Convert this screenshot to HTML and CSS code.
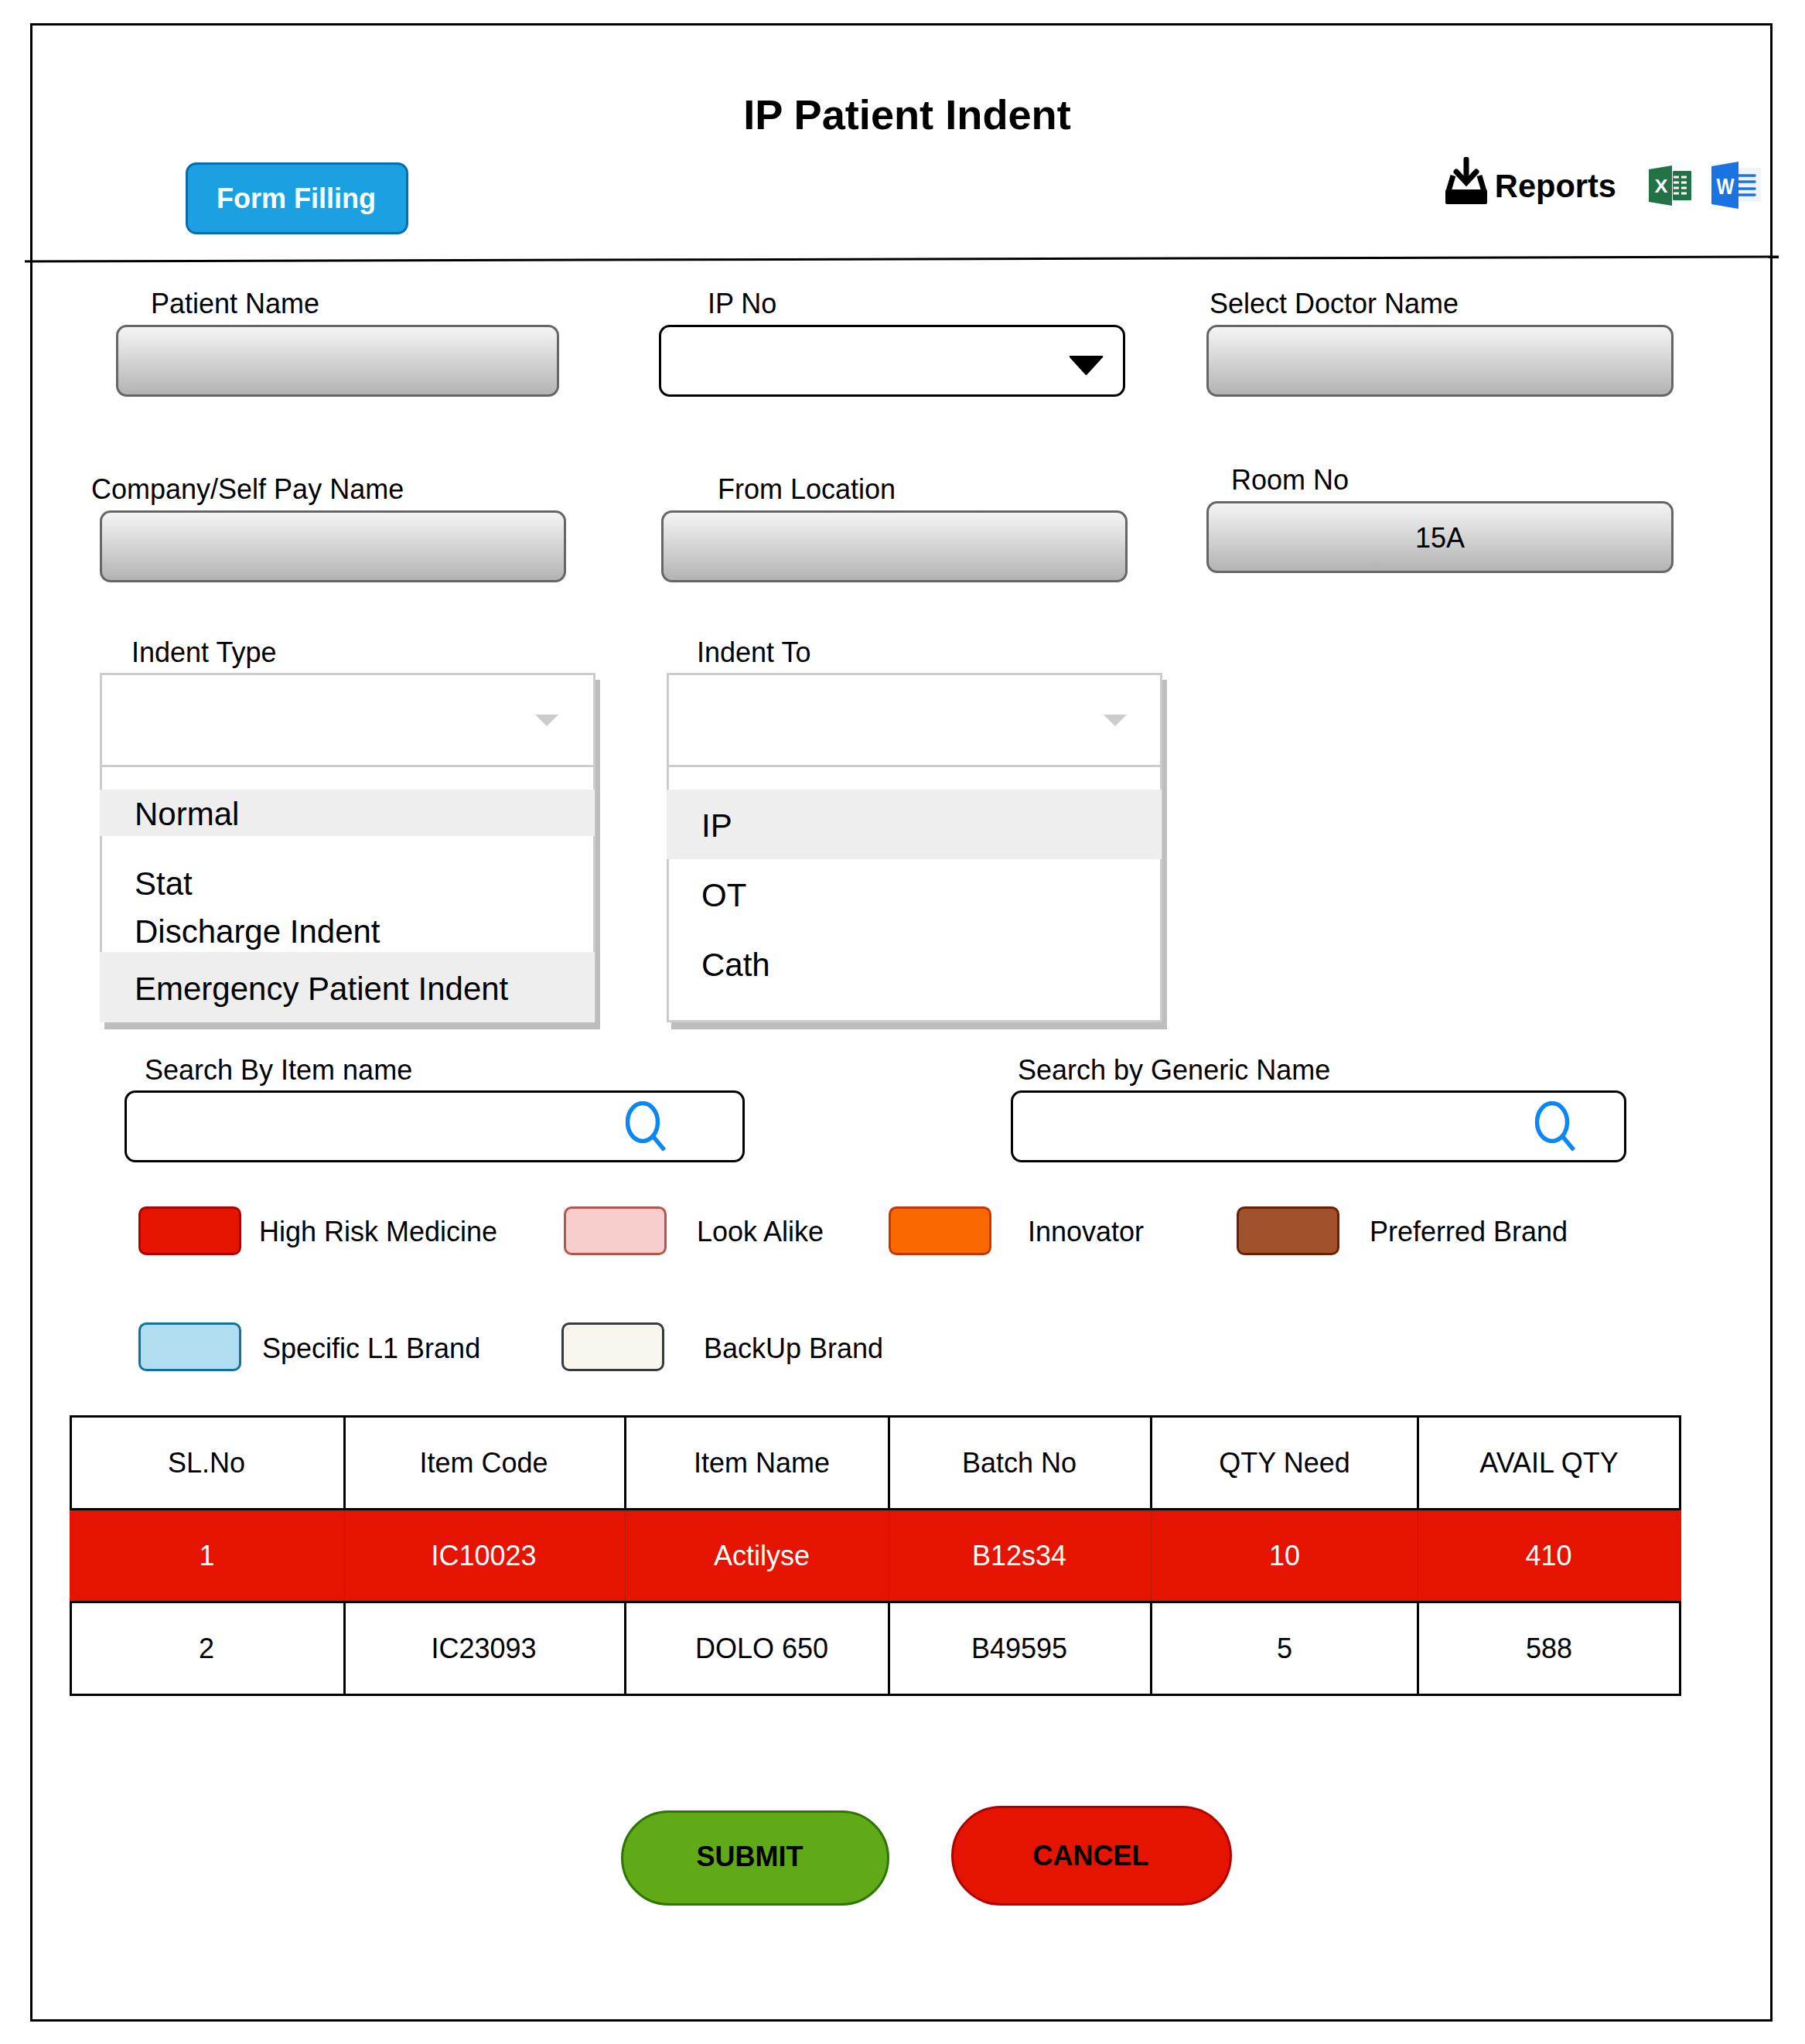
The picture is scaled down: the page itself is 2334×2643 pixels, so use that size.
FILE: index.html
```html
<!DOCTYPE html>
<html lang="en">
<head>
    <meta charset="UTF-8">
    <title>IP Patient Indent</title>
    <link rel="stylesheet" href="styles.css">
</head>
<body>
    <div class="frame">
        <header class="head">
            <h1>IP Patient Indent</h1>
            <div class="head-row">
                <button class="form-btn">Form Filling</button>
                <div class="tools">
                    <svg class="ic-reports" viewBox="0 0 54 61">
                        <path d="M27 3V32M14 19L27 33L40 19" fill="none" stroke="#000" stroke-width="7" stroke-linecap="round" stroke-linejoin="miter"/>
                        <path d="M10 24L3.5 46H50.5L44 24" fill="none" stroke="#000" stroke-width="7" stroke-linejoin="round"/>
                        <rect x="0" y="42" width="54" height="19" rx="2"/>
                    </svg>
                    <span class="reports">Reports</span>
                    <svg class="ic-excel" viewBox="0 0 55 52">
                        <rect x="31" y="7" width="24" height="38" rx="1" fill="#217346"/>
                        <path d="M0 5L30 0V52L0 47Z" fill="#217346"/>
                        <text x="16" y="35" class="logo-letter" font-size="24" textLength="17" lengthAdjust="spacingAndGlyphs">X</text>
                        <path d="M32 15h7M42 15h7M32 22h7M42 22h7M32 29h7M42 29h7M32 36h7M42 36h7" stroke="#fff" stroke-width="3"/>
                    </svg>
                    <svg class="ic-word" viewBox="0 0 64 61">
                        <rect x="34" y="8" width="30" height="44" rx="1" fill="#f0f4f8"/>
                        <path d="M0 6L35 0V61L0 55Z" fill="#1a73e0"/>
                        <text x="18" y="42" class="logo-letter" font-size="30" textLength="23" lengthAdjust="spacingAndGlyphs">W</text>
                        <path d="M35 18h21M35 26h21M35 35h21M35 43h21" stroke="#1a73e0" stroke-width="3.5" stroke-linecap="round"/>
                    </svg>
                </div>
            </div>
        </header>
        <svg class="rule" viewBox="0 0 2268 8"><line x1="0" y1="7" x2="2268" y2="1" stroke="#000" stroke-width="3"/></svg>

        <section class="row row-a">
            <div class="field f-patient">
                <label class="lbl">Patient Name</label>
                <div class="box"></div>
            </div>
            <div class="field f-ipno">
                <label class="lbl">IP No</label>
                <div class="box-select">
                    <svg class="caret" viewBox="0 0 45 27"><path d="M2 1H43Q45 1 44 3L24 25Q22.500 27 21 25L1 3Q0 1 2 1Z"/></svg>
                </div>
            </div>
            <div class="field f-doctor">
                <label class="lbl">Select Doctor Name</label>
                <div class="box"></div>
            </div>
        </section>

        <section class="row row-b">
            <div class="field f-company">
                <label class="lbl">Company/Self Pay Name</label>
                <div class="box"></div>
            </div>
            <div class="field f-location">
                <label class="lbl">From Location</label>
                <div class="box"></div>
            </div>
            <div class="field f-room">
                <label class="lbl">Room No</label>
                <div class="box">15A</div>
            </div>
        </section>

        <section class="row row-c">
            <div class="field f-type">
                <label class="lbl">Indent Type</label>
                <div class="dropdown">
                    <div class="dd-head"><span class="dd-arrow"></span></div>
                    <ul class="dd-list">
                        <li class="opt opt-on">Normal</li>
                        <li class="opt opt-stat">Stat</li>
                        <li class="opt opt-discharge">Discharge Indent</li>
                        <li class="opt opt-on opt-last">Emergency Patient Indent</li>
                    </ul>
                </div>
            </div>
            <div class="field f-to">
                <label class="lbl">Indent To</label>
                <div class="dropdown">
                    <div class="dd-head"><span class="dd-arrow"></span></div>
                    <ul class="dd-list">
                        <li class="opt opt-tall opt-on">IP</li>
                        <li class="opt opt-tall">OT</li>
                        <li class="opt opt-tall">Cath</li>
                    </ul>
                </div>
            </div>
        </section>

        <section class="row row-search">
            <div class="field f-item">
                <label class="lbl">Search By Item name</label>
                <div class="search">
                    <svg class="lens" viewBox="0 0 53 65"><ellipse cx="22" cy="27" rx="19.500" ry="24.500" fill="none" stroke="#0a87f5" stroke-width="5.500"/><path d="M36 46L50 63" stroke="#0a87f5" stroke-width="5.500"/></svg>
                </div>
            </div>
            <div class="field f-generic">
                <label class="lbl">Search by Generic Name</label>
                <div class="search">
                    <svg class="lens" viewBox="0 0 53 65"><ellipse cx="22" cy="27" rx="19.500" ry="24.500" fill="none" stroke="#0a87f5" stroke-width="5.500"/><path d="M36 46L50 63" stroke="#0a87f5" stroke-width="5.500"/></svg>
                </div>
            </div>
        </section>

        <section class="legend legend-one">
            <span class="swatch sw-red"></span><span class="lg">High Risk Medicine</span>
            <span class="swatch sw-pink"></span><span class="lg">Look Alike</span>
            <span class="swatch sw-orange"></span><span class="lg">Innovator</span>
            <span class="swatch sw-brown"></span><span class="lg">Preferred Brand</span>
        </section>
        <section class="legend legend-two">
            <span class="swatch sw-blue"></span><span class="lg">Specific L1 Brand</span>
            <span class="swatch sw-cream"></span><span class="lg">BackUp Brand</span>
        </section>

        <table class="items">
            <colgroup>
                <col class="c1"><col class="c2"><col class="c3"><col class="c4"><col class="c5"><col class="c6">
            </colgroup>
            <thead>
                <tr>
                    <th>SL.No</th>
                    <th>Item Code</th>
                    <th>Item Name</th>
                    <th>Batch No</th>
                    <th>QTY Need</th>
                    <th>AVAIL QTY</th>
                </tr>
            </thead>
            <tbody>
                <tr class="risk">
                    <td>1</td>
                    <td>IC10023</td>
                    <td>Actilyse</td>
                    <td>B12s34</td>
                    <td>10</td>
                    <td>410</td>
                </tr>
                <tr>
                    <td>2</td>
                    <td>IC23093</td>
                    <td>DOLO 650</td>
                    <td>B49595</td>
                    <td>5</td>
                    <td>588</td>
                </tr>
            </tbody>
        </table>

        <div class="actions">
            <button class="pill pill-submit">SUBMIT</button>
            <button class="pill pill-cancel">CANCEL</button>
        </div>
    </div>
</body>
</html>
```

FILE: styles.css
```css
* { box-sizing: border-box; }
body { margin: 0; background: #fff; color: #000; font-family: "Liberation Sans", Arial, sans-serif; font-size: 36px; }

.frame { width: 2253px; height: 2584px; margin: 30px 0 0 39px; border: 3px solid #000; }

/* header */
.head { height: 298px; padding-top: 84px; }
h1 { margin: 0; padding-left: 15px; font-size: 54.2px; line-height: 62px; text-align: center; }
.head-row { display: flex; justify-content: space-between; align-items: flex-start; margin-top: 23px; padding: 0 12px 0 198px; }
.form-btn { width: 288px; height: 93px; margin-top: 8px; padding: 1px 2px 0 0; background: #1ba1e2; border: 3px solid #006eaf; border-radius: 14px; color: #fff; font: bold 36px "Liberation Sans", Arial, sans-serif; }
.tools { display: flex; align-items: flex-start; margin-top: 1px; }
.ic-reports { width: 54px; height: 61px; }
.reports { margin: 14px 42px 0 10px; font-size: 41.6px; font-weight: bold; line-height: 48px; }
.ic-excel { width: 55px; height: 52px; margin: 11px 26px 0 0; }
.ic-word { width: 64px; height: 61px; margin-top: 6px; }
.logo-letter { fill: #fff; font-family: "Liberation Sans", Arial, sans-serif; font-weight: bold; text-anchor: middle; }
.rule { display: block; width: 2268px; height: 8px; margin-left: -10px; overflow: visible; }

/* form rows */
.row { display: flex; align-items: flex-start; }
.row-a { margin-top: 34px; padding-left: 108px; }
.row-b { margin-top: 88px; padding-left: 87px; }
.row-c { margin-top: 69px; padding-left: 87px; }
.row-search { margin-top: 41px; padding-left: 119px; }

.lbl { display: block; height: 47px; line-height: 40px; white-space: nowrap; }
.row-c .lbl { height: 48px; line-height: 43px; }
.row-search .lbl { line-height: 41px; }
.box { display: flex; align-items: center; justify-content: center; height: 93px; background: linear-gradient(#f5f5f5, #b3b3b3); border: 3px solid #666; border-radius: 14px; }
.box-select { display: flex; justify-content: flex-end; height: 93px; padding: 36px 25px 0 0; border: 3px solid #000; border-radius: 14px; }
.caret { width: 45px; height: 27px; }

.f-patient { width: 573px; }
.f-patient .lbl { padding-left: 45px; }
.f-ipno { width: 603px; margin-left: 129px; }
.f-ipno .lbl { padding-left: 63px; }
.f-doctor { width: 604px; margin-left: 105px; }
.f-doctor .lbl { padding-left: 4px; }
.f-company { width: 603px; margin-top: 12px; }
.f-company .lbl { margin-left: -11px; }
.f-location { width: 603px; margin: 12px 0 0 123px; }
.f-location .lbl { padding-left: 73px; }
.f-room { width: 604px; margin-left: 102px; }
.f-room .lbl { padding-left: 32px; }
.f-room .box { padding-top: 3px; }

/* open dropdowns */
.f-type { width: 641px; }
.f-type .lbl { padding-left: 41px; }
.f-to { width: 641px; margin-left: 92px; }
.f-to .lbl { padding-left: 39px; }
.dropdown { height: 452px; border: 3px solid #ccc; background: #fff; box-shadow: 6px 9px 0 #bdbdbd; }
.dd-head { display: flex; justify-content: flex-end; height: 119px; padding: 51px 45px 0 0; border-bottom: 3px solid #ccc; }
.f-to .dd-head { padding-right: 43px; }
.dd-arrow { width: 0; height: 0; border-style: solid; border-width: 15px 15px 0; border-color: #ccc transparent transparent; }
.dd-list { margin: 0 -2px 0 -3px; padding: 29px 0 0; list-style: none; }
.opt { height: 60px; padding: 2px 0 0 45px; font-size: 42px; line-height: 60px; white-space: nowrap; }
.opt-on { background: #eee; }
.opt-stat { margin-top: 32px; padding-top: 0; }
.opt-discharge { height: 58px; }
.opt-last { height: 91px; padding-top: 18px; }
.opt-tall { height: 90px; padding-top: 17px; }

/* search */
.f-item { width: 802px; }
.f-item .lbl { padding-left: 26px; }
.f-generic { width: 796px; margin-left: 344px; }
.f-generic .lbl { padding-left: 9px; }
.search { height: 93px; padding: 11px 0 0 645px; border: 3px solid #000; border-radius: 14px; }
.f-generic .search { padding-left: 675px; }
.lens { display: block; width: 53px; height: 65px; }

/* legend */
.legend { display: grid; align-items: center; height: 63px; padding-left: 137px; white-space: nowrap; }
.legend-one { margin-top: 57px; grid-template-columns: 156px 394px 172px 248px 180px 270px 172px auto; }
.legend-two { margin-top: 87px; grid-template-columns: 160px 387px 184px auto; }
.lg { padding-top: 2px; }
.legend-two .lg { padding-top: 4px; }
.swatch { width: 133px; height: 63px; border: 3px solid; border-radius: 10px; }
.sw-red { background: #e51400; border-color: #b20000; }
.sw-pink { background: #f8cecc; border-color: #b85450; }
.sw-orange { background: #fa6800; border-color: #c73500; }
.sw-brown { background: #a0522d; border-color: #6d1f00; }
.sw-blue { background: #b1ddf0; border-color: #10739e; }
.sw-cream { background: #f9f7ed; border-color: #36393d; }

/* table */
.items { width: 2082px; margin: 57px 0 0 48px; border-collapse: collapse; table-layout: fixed; }
.c1 { width: 354px; }
.c2 { width: 363px; }
.c3 { width: 341px; }
.c4 { width: 339px; }
.c5 { width: 345px; }
.c6 { width: 339px; }
th, td { height: 120px; padding: 0; border: 3px solid #000; font-weight: normal; text-align: center; }
th:nth-child(-n+2), td:nth-child(-n+2) { padding-right: 3px; }
th:nth-child(3), td:nth-child(3) { padding-left: 12px; }
th:nth-child(4), td:nth-child(4) { padding-right: 2px; }
.risk td { background: #e51400; color: #fff; border-left: 1px solid #b81a0a; border-right: 1px solid #b81a0a; }
.risk td:first-child { border-left: 3px solid #e51400; }
.risk td:last-child { border-right: 3px solid #e51400; }

/* actions */
.actions { display: flex; align-items: flex-end; gap: 80px; margin-top: 142px; padding-left: 761px; }
.pill { height: 123px; border: 3px solid; border-radius: 62px; font: bold 36px "Liberation Sans", Arial, sans-serif; color: #000; }
.pill-submit { width: 347px; padding: 0 14px 4px 0; background: #60a917; border-color: #2d7600; }
.pill-cancel { width: 363px; height: 129px; padding: 0 2px 0 0; background: #e51400; border-color: #b20000; border-radius: 65px; }
```
